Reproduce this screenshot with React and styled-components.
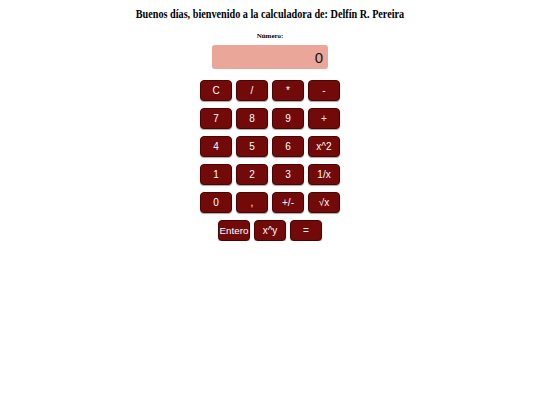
import React from "react";
import styled, { createGlobalStyle } from "styled-components";

const Global = createGlobalStyle`
  html, body { margin: 0; padding: 0; background: #ffffff; }
  body { font-family: "Liberation Serif", "Times New Roman", serif; }
`;

const Page = styled.div`
  display: flex;
  flex-direction: column;
  align-items: center;
  padding-top: 8px;
`;

const Title = styled.h1`
  margin: 0;
  font-family: "Liberation Serif", "Times New Roman", serif;
  font-size: 10.2px;
  font-weight: bold;
  color: #000;
  line-height: 13px;
  transform: scaleY(1.12);
`;

const Label = styled.div`
  margin-top: 11px;
  font-family: "Liberation Serif", "Times New Roman", serif;
  font-size: 7px;
  font-weight: bold;
  line-height: 8px;
  color: #000;
`;

const Display = styled.div`
  margin-top: 5px;
  width: 116px;
  height: 24px;
  box-sizing: border-box;
  background: #eba69a;
  border-radius: 3px;
  display: flex;
  align-items: center;
  justify-content: flex-end;
  padding-right: 5px;
  font-family: "Liberation Sans", Arial, sans-serif;
  font-size: 15px;
  color: #111;
`;

const Keypad = styled.div`
  margin-top: 11px;
  display: flex;
  flex-direction: column;
  align-items: center;
  gap: 7px;
`;

const Row = styled.div`
  display: flex;
  gap: 4px;
`;

const Key = styled.button`
  width: 32px;
  height: 21px;
  padding: 0;
  box-sizing: border-box;
  background: #730a0a;
  border: 1px solid #4a0404;
  border-radius: 4px;
  box-shadow: 0 1px 1px rgba(0, 0, 0, 0.35);
  color: #ffffff;
  font-family: "Liberation Sans", Arial, sans-serif;
  font-size: ${(p) => (p.$wide ? "9.8px" : "10px")};
  white-space: nowrap;
  overflow: visible;
  cursor: pointer;
`;

const rows = [
  ["C", "/", "*", "-"],
  ["7", "8", "9", "+"],
  ["4", "5", "6", "x^2"],
  ["1", "2", "3", "1/x"],
  ["0", ",", "+/-", "√x"],
  ["Entero", "x^y", "="],
];

export default function App() {
  return (
    <>
      <Global />
      <Page>
        <Title>Buenos días, bienvenido a la calculadora de: Delfín R. Pereira</Title>
        <Label>Número:</Label>
        <Display>0</Display>
        <Keypad>
          {rows.map((r, i) => (
            <Row key={i}>
              {r.map((k) => (
                <Key key={k} $wide={k === "Entero"}>{k}</Key>
              ))}
            </Row>
          ))}
        </Keypad>
      </Page>
    </>
  );
}
